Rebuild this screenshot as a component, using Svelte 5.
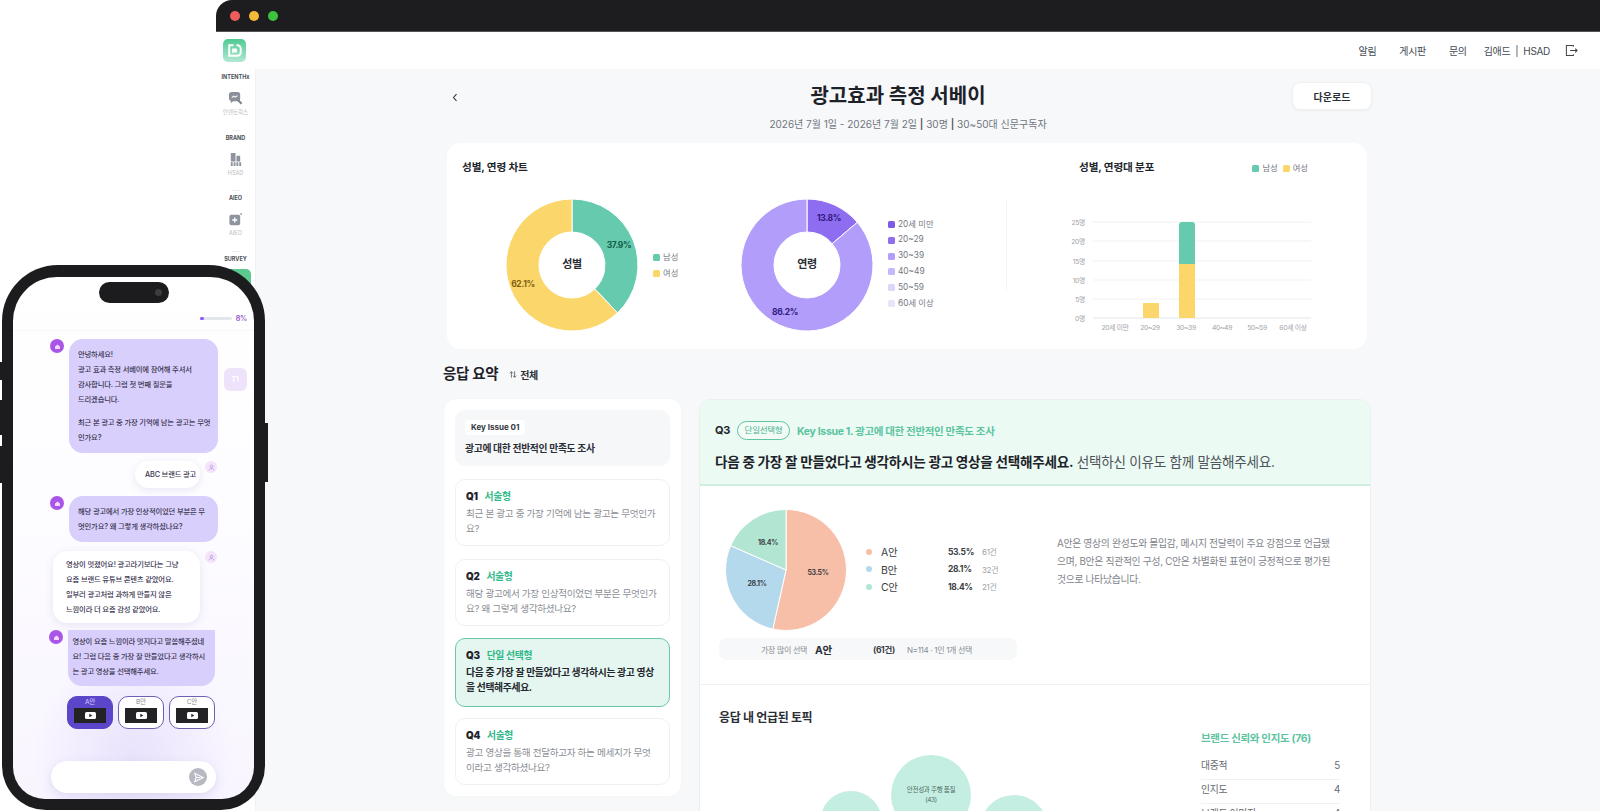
<script>
  function pt(cx, cy, r, pct) {
    const a = (pct / 100) * Math.PI * 2 - Math.PI / 2;
    return [cx + r * Math.cos(a), cy + r * Math.sin(a)];
  }
  function slice(cx, cy, r, r0, p0, p1) {
    const [x1, y1] = pt(cx, cy, r, p0);
    const [x2, y2] = pt(cx, cy, r, p1);
    const large = p1 - p0 > 50 ? 1 : 0;
    if (!r0) return `M${cx} ${cy}L${x1} ${y1}A${r} ${r} 0 ${large} 1 ${x2} ${y2}Z`;
    const [x3, y3] = pt(cx, cy, r0, p1);
    const [x4, y4] = pt(cx, cy, r0, p0);
    return `M${x1} ${y1}A${r} ${r} 0 ${large} 1 ${x2} ${y2}L${x3} ${y3}A${r0} ${r0} 0 ${large} 0 ${x4} ${y4}Z`;
  }
  const ageLegend = [
    ['20세 미만', '#7c5ce6'], ['20~29', '#8f6df0'], ['30~39', '#b39dfb'],
    ['40~49', '#c7b8fb'], ['50~59', '#dcd6fa'], ['60세 이상', '#e8e5fb']
  ];
  const grid = [['25명', 22], ['20명', 41], ['15명', 61], ['10명', 80], ['5명', 99], ['0명', 118]];
  const ageX = [['20세 미만', 36], ['20~29', 71], ['30~39', 107], ['40~49', 143], ['50~59', 178], ['60세 이상', 214]];
  const questions = [
    { q: 'Q1', type: '서술형', text: '최근 본 광고 중 가장 기억에 남는 광고는 무엇인가\n요?' },
    { q: 'Q2', type: '서술형', text: '해당 광고에서 가장 인상적이었던 부분은 무엇인가\n요? 왜 그렇게 생각하셨나요?' },
    { q: 'Q3', type: '단일 선택형', text: '다음 중 가장 잘 만들었다고 생각하시는 광고 영상\n을 선택해주세요.', active: true },
    { q: 'Q4', type: '서술형', text: '광고 영상을 통해 전달하고자 하는 메세지가 무엇\n이라고 생각하셨나요?' }
  ];
  const options = [
    ['A안', '53.5%', '61건', '#f8bfa8'],
    ['B안', '28.1%', '32건', '#b5d9ec'],
    ['C안', '18.4%', '21건', '#b3e6d2']
  ];
  const topics = [['대중적', 5], ['인지도', 4], ['브랜드 이미지', 4]];
  const choices = ['A안', 'B안', 'C안'];
</script>

<div class="page">
  <div class="window">
    <div class="titlebar">
      <i class="dot red"></i><i class="dot yellow"></i><i class="dot green"></i>
    </div>
    <header class="topnav">
      <div class="logo">
        <svg viewBox="0 0 24 24" width="23" height="23" fill="none" stroke="#fff">
          <path d="M11 6.500H6.500v11H15a3.500 3.500 0 0 0 3.500-3.500v-4A3.500 3.500 0 0 0 15 6.500h-1" stroke-width="2"/>
          <path d="M9.500 10h5v4h-4l-1 1.200z" fill="#fff" stroke="none"/>
        </svg>
      </div>
      <nav class="links">
        <span>알림</span><span>게시판</span><span>문의</span>
        <span class="account">김애드 &nbsp;|&nbsp; HSAD</span>
        <svg class="logout" viewBox="0 0 14 14" width="13" height="13" fill="none" stroke="#444" stroke-width="1.100">
          <path d="M9 3V1.500H1.500v11H9V11"/><path d="M5.500 7H13M11 5l2 2-2 2"/>
        </svg>
      </nav>
    </header>
    <div class="body">
      <aside class="side">
        <b>INTENTHx</b>
        <svg viewBox="0 0 16 16" width="15" height="15">
          <path d="M1 4a3 3 0 0 1 3-3h6a3 3 0 0 1 3 3v4a3 3 0 0 1-3 3H5.500L3 13v-2.400A3 3 0 0 1 1 8z" fill="#8a8f9a"/>
          <path d="M10.500 9.500l4 4" stroke="#7c818c" stroke-width="2.200"/>
          <path d="M4 7l2-1.500 1.500 1L10 5" stroke="#fff" fill="none" stroke-width="1.100"/>
        </svg>
        <small>인텐트릭스</small>
        <hr />
        <b>BRAND</b>
        <svg viewBox="0 0 16 16" width="15" height="15" fill="#8e939e">
          <path d="M3 1h5v9H3zM9 4h4v6H9zM3 11h2v4H3zM6 11h2v4H6zM9 11h2v4H9zM12 11h2v4h-2z"/>
        </svg>
        <small>HSAD</small>
        <hr />
        <b>AIEO</b>
        <svg viewBox="0 0 16 16" width="15" height="15">
          <rect x="1.500" y="3" width="11.500" height="11" rx="2" fill="#8e939e"/>
          <path d="M7.200 5.800v5.400M4.500 8.500h5.400" stroke="#fff" stroke-width="1.400"/>
          <circle cx="14" cy="2" r="1" fill="#8e939e"/>
        </svg>
        <small>AIEO</small>
        <hr />
        <b>SURVEY</b>
        <i class="side-active"></i>
      </aside>
      <main class="main">
        <div class="head">
          <button class="back" aria-label="뒤로">
            <svg viewBox="0 0 8 12" width="6" height="9" fill="none" stroke="#333" stroke-width="1.400"><path d="M6 1.500L2 6l4 4.500"/></svg>
          </button>
          <div class="headings">
            <h1>광고효과 측정 서베이</h1>
            <p>2026년 7월 1일 - 2026년 7월 2일 <em>|</em> 30명 <em>|</em> 30~50대 신문구독자</p>
          </div>
          <button class="download">다운로드</button>
        </div>

        <section class="chartcard">
          <div class="chartleft">
            <h3>성별, 연령 차트</h3>
            <div class="donuts">
              <div class="donutgroup first">
                <svg viewBox="0 0 132 132" width="132" height="132">
                  <path d={slice(66, 66, 66, 33, 0, 37.9)} fill="#66cbae" stroke="#fff"/>
                  <path d={slice(66, 66, 66, 33, 37.9, 100)} fill="#fbd66b" stroke="#fff"/>
                  <text x="113" y="49" class="pct" fill="#0f5c47">37.9%</text>
                  <text x="17" y="88" class="pct" fill="#7d5f10">62.1%</text>
                  <text x="66" y="69" class="center">성별</text>
                </svg>
                <ul class="legend">
                  <li><i style="background:#66cbae"></i>남성</li>
                  <li><i style="background:#fbd66b"></i>여성</li>
                </ul>
              </div>
              <div class="donutgroup">
                <svg viewBox="0 0 132 132" width="132" height="132">
                  <path d={slice(66, 66, 66, 33, 0, 13.8)} fill="#8f6df0" stroke="#fff"/>
                  <path d={slice(66, 66, 66, 33, 13.8, 100)} fill="#b39dfb" stroke="#fff"/>
                  <text x="88" y="22" class="pct" fill="#2f1a80">13.8%</text>
                  <text x="44" y="116" class="pct" fill="#2f1a80">86.2%</text>
                  <text x="66" y="69" class="center">연령</text>
                </svg>
                <ul class="legend age">
                  {#each ageLegend as [label, color]}
                    <li><i style="background:{color}"></i>{label}</li>
                  {/each}
                </ul>
              </div>
            </div>
          </div>
          <div class="divider"></div>
          <div class="chartright">
            <div class="barhead">
              <h3>성별, 연령대 분포</h3>
              <ul class="legend inline">
                <li><i style="background:#66cbae"></i>남성</li>
                <li><i style="background:#fbd66b"></i>여성</li>
              </ul>
            </div>
            <svg class="bars" viewBox="0 0 240 140" width="240" height="140">
              {#each grid as [label, y]}
                <line x1="14" x2="232" y1={y} y2={y} stroke={y === 118 ? '#e4e6ea' : '#f0f1f3'}/>
                <text x="6" y={y + 2.500} text-anchor="end" class="axis">{label}</text>
              {/each}
              <rect x="64" y="103" width="16" height="15" fill="#fbd66b"/>
              <path d="M100 64V25a3 3 0 0 1 3-3h10a3 3 0 0 1 3 3v39z" fill="#66cbae"/>
              <rect x="100" y="64" width="16" height="54" fill="#fbd66b"/>
              {#each ageX as [label, x]}
                <text x={x} y="130" text-anchor="middle" class="axis">{label}</text>
              {/each}
            </svg>
          </div>
        </section>

        <div class="sumhead">
          <h2>응답 요약</h2>
          <svg viewBox="0 0 10 10" width="8" height="9" fill="none" stroke="#555" stroke-width="1"><path d="M3 9V1.500M1 3.500l2-2 2 2M7 1v7.500M5 6.500l2 2 2-2"/></svg>
          <span>전체</span>
        </div>

        <div class="columns">
          <div class="qpanel">
            <div class="issue">
              <span class="issuetag">Key Issue 01</span>
              <p>광고에 대한 전반적인 만족도 조사</p>
            </div>
            {#each questions as item}
              <div class="qcard" class:active={item.active}>
                <div class="qline"><b>{item.q}</b><span>{item.type}</span></div>
                <p>{item.text}</p>
              </div>
            {/each}
          </div>

          <div class="detail">
            <div class="dhead">
              <div class="dmeta">
                <b>Q3</b><span class="pill">단일선택형</span><span class="issueline">Key Issue 1. 광고에 대한 전반적인 만족도 조사</span>
              </div>
              <p class="dq"><b>다음 중 가장 잘 만들었다고 생각하시는 광고 영상을 선택해주세요.</b> 선택하신 이유도 함께 말씀해주세요.</p>
            </div>
            <div class="dbody">
              <div class="dleft">
                <div class="pierow">
                  <svg viewBox="0 0 122 122" width="122" height="122">
                    <path d={slice(61, 61, 60.500, 0, 0, 53.5)} fill="#f8bfa8" stroke="#fff"/>
                    <path d={slice(61, 61, 60.500, 0, 53.5, 81.6)} fill="#b5d9ec" stroke="#fff"/>
                    <path d={slice(61, 61, 60.500, 0, 81.6, 100)} fill="#b3e6d2" stroke="#fff"/>
                    <text x="93" y="66" class="slice">53.5%</text>
                    <text x="32" y="77" class="slice">28.1%</text>
                    <text x="43" y="36" class="slice">18.4%</text>
                  </svg>
                  <ul class="optlist">
                    {#each options as [name, pct, count, color]}
                      <li><i style="background:{color}"></i><span class="oname">{name}</span><b>{pct}</b><span class="ocount">{count}</span></li>
                    {/each}
                  </ul>
                </div>
                <div class="stat">
                  <span class="s1">가장 많이 선택</span><b class="s2">A안</b><b class="s3">(61건)</b><span class="s4">N=114 · 1인 1개 선택</span>
                </div>
              </div>
              <p class="summary">A안은 영상의 완성도와 몰입감, 메시지 전달력이 주요 강점으로 언급됐으며, B안은 직관적인 구성, C안은 차별화된 표현이 긍정적으로 평가된 것으로 나타났습니다.</p>
            </div>
            <div class="topics">
              <div class="tleft">
                <h4>응답 내 언급된 토픽</h4>
                <svg viewBox="0 0 260 70" width="260" height="70" class="bubbles">
                  <circle cx="41" cy="65" r="31" fill="#c5eee2"/>
                  <circle cx="121" cy="38" r="40" fill="#c5eee2"/>
                  <circle cx="204" cy="72" r="34" fill="#c5eee2"/>
                  <text x="121" y="35" class="btext" font-weight="700">안전성과 주행 품질</text>
                  <text x="121" y="45" class="btext">(43)</text>
                </svg>
              </div>
              <div class="tright">
                <h5>브랜드 신뢰와 인지도 (76)</h5>
                {#each topics as [name, n]}
                  <div class="trow"><span>{name}</span><span>{n}</span></div>
                {/each}
              </div>
            </div>
          </div>
        </div>
      </main>
    </div>
  </div>

  <div class="phone">
    <i class="btn b1"></i><i class="btn b2"></i><i class="btn b3"></i><i class="btn b4"></i>
    <div class="screen">
      <div class="island"><i></i></div>
      <div class="progress"><div class="track"><i></i></div><span>8%</span></div>
      <div class="chat">
        <div class="row bot">
          <i class="ava"><svg viewBox="0 0 10 10" width="7" height="7"><path d="M1.500 5L5 2l3.500 3v3.500h-7z" fill="#f3d9ff"/></svg></i>
          <div class="bubble lav">
            <p>안녕하세요!<br />광고 효과 측정 서베이에 참여해 주셔서<br />감사합니다. 그럼 첫 번째 질문을<br />드리겠습니다.</p>
            <p class="gap">최근 본 광고 중 가장 기억에 남는 광고는 무엇<br />인가요?</p>
          </div>
          <span class="t1">T1</span>
        </div>
        <div class="row user r2">
          <div class="bubble white short">ABC 브랜드 광고</div>
          <i class="uava"><svg viewBox="0 0 10 10" width="7" height="7" fill="none" stroke="#b98ad8"><circle cx="5" cy="3.500" r="1.800"/><path d="M1.500 9c.5-2 2-2.500 3.500-2.500S8 7 8.500 9"/></svg></i>
        </div>
        <div class="row bot r3">
          <i class="ava"><svg viewBox="0 0 10 10" width="7" height="7"><path d="M1.500 5L5 2l3.500 3v3.500h-7z" fill="#f3d9ff"/></svg></i>
          <div class="bubble lav">해당 광고에서 가장 인상적이었던 부분은 무<br />엇인가요? 왜 그렇게 생각하셨나요?</div>
        </div>
        <div class="row user r4">
          <div class="bubble white long">영상이 멋졌어요! 광고라기보다는 그냥<br />요즘 브랜드 유튜브 콘텐츠 같았어요.<br />일부러 광고처럼 과하게 만들지 않은<br />느낌이라 더 요즘 감성 같았어요.</div>
          <i class="uava"><svg viewBox="0 0 10 10" width="7" height="7" fill="none" stroke="#b98ad8"><circle cx="5" cy="3.500" r="1.800"/><path d="M1.500 9c.5-2 2-2.500 3.500-2.500S8 7 8.500 9"/></svg></i>
        </div>
        <div class="row bot r5">
          <i class="ava"><svg viewBox="0 0 10 10" width="7" height="7"><path d="M1.500 5L5 2l3.500 3v3.500h-7z" fill="#f3d9ff"/></svg></i>
          <div class="bubble lav flat">영상이 요즘 느낌이라 멋지다고 말씀해주셨네<br />요! 그럼 다음 중 가장 잘 만들었다고 생각하시<br />는 광고 영상을 선택해주세요.</div>
        </div>
        <div class="choices">
          {#each choices as c, i}
            <div class="choice" class:sel={i === 0}>
              <span>{c}</span>
              <div class="video"><svg viewBox="0 0 11 7" width="11" height="7"><rect width="11" height="7" rx="1.500" fill="#fff"/><path d="M4.300 1.800l3 1.700-3 1.700z" fill="#222"/></svg></div>
            </div>
          {/each}
        </div>
      </div>
      <div class="input">
        <i class="send"><svg viewBox="0 0 12 12" width="11" height="11"><path d="M2 1.500l9 4.500-9 4.500 1.500-4.500z" fill="none" stroke="#fff" stroke-width="1.200"/><path d="M3.500 6H8" stroke="#fff"/></svg></i>
      </div>
    </div>
  </div>
</div>

<style>
  :global(body) { margin: 0; background: #fff; }
  * { box-sizing: border-box; }
  ul { list-style: none; margin: 0; padding: 0; }
  h1, h2, h3, h4, h5, p { margin: 0; }
  i { display: block; font-style: normal; }
  em { font-style: normal; color: #555; font-weight: 600; }

  .page {
    position: relative;
    height: 811px;
    overflow: hidden;
    padding-left: 216px;
    font-family: Inter, "Noto Sans CJK KR", sans-serif;
    color: #1f2329;
    letter-spacing: -0.02em;
  }
  .window { height: 811px; display: flex; flex-direction: column; }
  .titlebar {
    height: 32px; flex: none; background: #1d1d1f; border-radius: 16px 0 0 0;
    display: flex; align-items: center; gap: 9px; padding-left: 14px;
    border-bottom: 1px solid #555;
  }
  .dot { width: 10px; height: 10px; border-radius: 50%; }
  .red { background: #ee5c5e; } .yellow { background: #f5b93a; } .green { background: #3cc23f; }

  .topnav { height: 37px; flex: none; display: flex; align-items: center; justify-content: space-between; padding: 0 22px 0 7px; background: #fff; }
  .logo { width: 23px; height: 23px; border-radius: 5px; background: linear-gradient(180deg, #4fcb93, #b2e8d4); display: flex; align-items: center; justify-content: center; }
  .links { display: flex; align-items: center; font-size: 10px; color: #454a52; }
  .links span:nth-child(1) { margin-right: 23px; }
  .links span:nth-child(2) { margin-right: 23px; }
  .links span:nth-child(3) { margin-right: 17px; }
  .account { margin-right: 15px; }

  .body { flex: 1; display: flex; min-height: 0; }
  .side {
    width: 40px; flex: none; background: #fff; border-right: 1px solid #f0f1f3;
    display: flex; flex-direction: column; align-items: center; padding-top: 4px;
  }
  .side b { font-size: 5.500px; line-height: 8px; color: #4a4f58; font-weight: 700; letter-spacing: 0; }
  .side svg { margin-top: 10px; }
  .side small { font-size: 5.500px; line-height: 8px; color: #b6bac1; margin-top: 2px; letter-spacing: 0; }
  .side hr { width: 8px; height: 1px; border: 0; background: #eee; margin: 13.500px 0 3px; }
  .side-active { width: 31px; height: 28px; border-radius: 5px; background: #5cc98f; margin-top: 6px; flex: none; }

  .main { flex: 1; background: #f7f8fa; padding: 13px 0 0 187px; overflow: hidden; }
  .head { width: 929px; height: 61px; display: flex; align-items: flex-start; }
  .back { width: 24px; height: 24px; border: 0; background: none; padding: 0; margin: 3px 0 0 0; }
  .headings { flex: 1; text-align: center; padding-left: 57px; }
  .headings h1 { font-size: 20px; line-height: 28px; font-weight: 700; color: #1d2229; padding-right: 20px; letter-spacing: 0; }
  .headings p { font-size: 10px; line-height: 16px; color: #70757d; margin-top: 6px; letter-spacing: 0; }
  .download {
    width: 80px; height: 28px; background: #fff; border: 1px solid #eff0f2; border-radius: 8px;
    font: 700 10px Inter, "Noto Sans CJK KR", sans-serif; color: #2b2f36; box-shadow: 0 1px 3px rgba(0,0,0,.04);
  }

  .chartcard { width: 920px; height: 206px; margin-left: 4px; background: #fff; border-radius: 14px; display: flex; }
  .chartleft { width: 559px; padding: 18px 0 0 15px; flex: none; }
  .chartcard h3 { font-size: 10.600px; line-height: 14px; font-weight: 700; color: #22262c; letter-spacing: -0.01em; }
  .donuts { display: flex; margin-top: 24px; padding-left: 44px; }
  .donutgroup { display: flex; align-items: center; gap: 15px; }
  .donutgroup.first { width: 235px; }
  .pct { font: 700 8.500px Inter, sans-serif; text-anchor: middle; }
  .center { font: 700 11px Inter, "Noto Sans CJK KR", sans-serif; text-anchor: middle; fill: #2a2e35; }
  .legend li { display: flex; align-items: center; gap: 3px; font-size: 8.300px; line-height: 16px; color: #74787f; letter-spacing: 0; }
  .legend i { width: 7px; height: 7px; border-radius: 1.500px; flex: none; }
  .legend.age { margin-top: -2px; }
  .legend.age li { line-height: 15.800px; }
  .legend.inline { display: flex; gap: 5px; }
  .divider { width: 1px; height: 90px; margin-top: 57px; background: #f4f5f6; flex: none; }
  .chartright { margin-left: 72px; width: 280px; padding-top: 17px; }
  .barhead { display: flex; justify-content: space-between; align-items: center; width: 229px; }
  .bars { display: block; margin-top: 24px; overflow: visible; }
  .axis { font: 6.800px Inter, "Noto Sans CJK KR", sans-serif; fill: #a0a4aa; }

  .sumhead { display: flex; align-items: center; height: 50px; width: 920px; }
  .sumhead h2 { font-size: 14.500px; line-height: 20px; font-weight: 700; margin-right: 11px; color: #1d2229; }
  .sumhead span { font-size: 10px; font-weight: 700; margin-left: 3px; color: #2b2f36; }

  .columns { display: flex; gap: 18px; align-items: flex-start; width: 928px; padding-left: 1px; }
  .qpanel { width: 237px; flex: none; height: 397px; background: #fff; border-radius: 12px; padding: 11px; box-shadow: 0 0 2px rgba(0,0,0,.04); }
  .issue { height: 56px; background: #f6f7f9; border-radius: 10px; padding: 10px; margin-bottom: 13px; }
  .issuetag { display: block; width: fit-content; height: 15px; padding: 0 6px; background: #fff; border-radius: 4px; font-size: 8px; line-height: 15px; font-weight: 700; color: #333840; letter-spacing: 0; }
  .issue p { font-size: 9.800px; line-height: 14px; font-weight: 700; color: #2a2e35; margin-top: 7px; }
  .qcard { height: 67px; border: 1px solid #eef0f2; border-radius: 10px; padding: 10px 10px 0; margin-bottom: 12.500px; background: #fff; }
  .qcard.active { background: #e4f6ef; border-color: #68c7a5; height: 69px; margin-bottom: 11px; }
  .qline { display: flex; gap: 7px; font-size: 9.800px; line-height: 13px; font-weight: 700; }
  .qline span { color: #2fb889; }
  .qcard p { font-size: 9.600px; line-height: 15px; color: #8a8e95; margin-top: 3px; white-space: pre; }
  .qcard.active p { color: #23272d; font-weight: 700; font-size: 9.800px; }

  .detail { flex: 1; height: 500px; background: #fff; border: 1px solid #eceef0; border-radius: 12px 12px 0 0; overflow: hidden; }
  .dhead { height: 86px; background: #ebfaf3; border-bottom: 2px solid #cfeee0; padding: 21px 15px 0; }
  .dmeta { display: flex; align-items: center; height: 18px; }
  .dmeta b { font-size: 11px; color: #22262c; margin-right: 7px; }
  .pill { height: 19px; width: 53px; border: 1px solid #62c3a0; border-radius: 10px; font-size: 8.500px; line-height: 17px; color: #44b48c; text-align: center; margin-right: 7px; background: #f3fbf7; letter-spacing: -0.03em; }
  .issueline { font-size: 10.500px; font-weight: 700; color: #5cc49f; }
  .dq { font-size: 13.600px; line-height: 20px; margin-top: 13px; color: #4f545b; letter-spacing: -0.02em; }
  .dq b { color: #1d2229; }

  .dbody { height: 199px; display: flex; border-bottom: 1px solid #f0f1f3; padding: 23px 0 0 19px; }
  .dleft { width: 298px; flex: none; }
  .pierow { display: flex; align-items: center; padding-left: 6px; height: 122px; }
  .slice { font: 700 7px Inter, sans-serif; text-anchor: middle; fill: #3a3e44; }
  .optlist { margin-left: 19px; margin-top: -2px; }
  .optlist li { display: flex; align-items: center; height: 17.500px; }
  .optlist i { width: 6px; height: 6px; border-radius: 50%; margin-right: 9px; }
  .oname { width: 67px; font-size: 10.500px; color: #3a3e44; }
  .optlist b { width: 34px; font-size: 8.500px; color: #3a3e44; }
  .ocount { font-size: 8px; color: #a0a4aa; }
  .stat { height: 22px; margin-top: 7px; background: #f7f8fa; border-radius: 8px; display: flex; align-items: center; padding-left: 42px; }
  .s1 { font-size: 8px; color: #888c93; width: 54px; }
  .s2 { font-size: 10.500px; color: #2a2e35; width: 58px; }
  .s3 { font-size: 8.500px; color: #3a3e44; width: 34px; }
  .s4 { font-size: 8px; color: #888c93; }
  .summary { margin: 26px 0 0 40px; width: 278px; font-size: 9.800px; line-height: 18px; color: #80848b; letter-spacing: -0.03em; }

  .topics { display: flex; padding: 25px 0 0 19px; }
  .tleft { width: 482px; }
  .tleft h4 { font-size: 12px; line-height: 16px; font-weight: 700; color: #2a2e35; }
  .bubbles { display: block; margin: 31px 0 0 91px; overflow: visible; }
  .btext { font: 6.500px Inter, "Noto Sans CJK KR", sans-serif; text-anchor: middle; fill: #4f6c63; }
  .tright { width: 139px; padding-top: 21px; }
  .tright h5 { font-size: 10.500px; line-height: 16px; font-weight: 700; color: #5cc49f; margin-bottom: 9px; }
  .trow { display: flex; justify-content: space-between; font-size: 9.800px; color: #666a71; height: 24px; line-height: 20px; border-bottom: 1px solid #f0f1f3; }

  /* phone overlays the window */
  .phone {
    position: absolute; left: 2px; top: 265px; width: 263px; height: 545px;
    background: #1c1c1e; border-radius: 56px 56px 44px 44px; padding: 12px 11px 11px;
  }
  .btn { position: absolute; background: #1c1c1e; }
  .b1 { left: -2px; top: 97px; width: 3px; height: 18px; }
  .b2 { left: -2px; top: 135px; width: 3px; height: 35px; }
  .b3 { left: -2px; top: 181px; width: 3px; height: 37px; }
  .b4 { right: -3px; top: 158px; width: 4px; height: 59px; }
  .screen {
    position: relative; height: 522px; border-radius: 44px 44px 32px 32px; overflow: hidden;
    background:
      radial-gradient(ellipse 100px 120px at 50% 92%, #e9e2fc 0%, rgba(233,226,252,0) 100%),
      linear-gradient(180deg, #fff 0%, #fdfcff 45%, #f8f5ff 100%);
    letter-spacing: -0.01em;
  }
  .island { position: absolute; left: 86px; top: 5px; width: 70px; height: 21px; border-radius: 11px; background: #1c1c1e; }
  .island i { position: absolute; right: 7px; top: 7px; width: 7px; height: 7px; border-radius: 50%; background: #3c3c40; }
  .progress { height: 54px; border-bottom: 1px solid #f7f7f9; display: flex; align-items: flex-end; justify-content: flex-end; padding: 0 7px 7px 0; gap: 4px; }
  .track { width: 32px; height: 3px; border-radius: 2px; background: #e3e7ec; margin-bottom: 3px; }
  .track i { width: 4px; height: 3px; background: #8b5cf6; border-radius: 2px; }
  .progress span { font-size: 7px; line-height: 9px; font-weight: 700; color: #9a5fd0; }

  .chat { padding-top: 8px; }
  .row { display: flex; align-items: flex-start; font-size: 7.300px; line-height: 15px; font-weight: 500; color: #3a3650; }
  .row.bot { padding-left: 37px; }
  .row.user { justify-content: flex-end; padding-right: 37px; }
  .ava { width: 14px; height: 14px; border-radius: 50%; background: #a855e8; margin-right: 4.500px; display: flex; align-items: center; justify-content: center; flex: none; }
  .uava { width: 12px; height: 12px; border-radius: 50%; background: #f3e4fb; display: flex; align-items: center; justify-content: center; margin-left: 5px; flex: none; }
  .bubble { border-radius: 14px; }
  .lav { width: 149px; background: #d9cffc; padding: 8px 9.500px; white-space: nowrap; }
  .lav p.gap { margin-top: 8px; }
  .t1 { width: 23px; height: 23px; border-radius: 6px; background: #efe3fb; color: #fff; font-size: 7px; font-weight: 700; text-align: center; line-height: 23px; margin: 29px 0 0 6px; flex: none; }
  .white { background: #fff; box-shadow: 0 2px 8px rgba(110,90,180,.14); }
  .short { height: 27px; width: 65px; border-radius: 14px; line-height: 27px; white-space: nowrap; padding-left: 10px; }
  .r2 { margin-top: 8px; }
  .r3 { margin-top: 8px; }
  .r4 { margin-top: 9px; }
  .long { width: 147px; padding: 6px 0 6px 13px; white-space: nowrap; }
  .r5 { margin-top: 7px; }
  .r5.bot { padding-left: 36px; }
  .lav.flat { border-radius: 0 0 14px 14px; padding: 3.500px 5px 7.500px; width: 147px; }
  .choices { display: flex; gap: 5px; padding: 10px 0 0 54px; }
  .choice { width: 46px; height: 33px; border: 1.200px solid #6e5fb0; border-radius: 10px; text-align: center; background: #fff; }
  .choice span { display: block; font-size: 6.500px; line-height: 11px; color: #8a8a96; }
  .choice.sel { background: #5b45c9; border-color: #5b45c9; }
  .choice.sel span { color: #d9d2ff; }
  .video { width: 32px; height: 15px; margin: 0 auto; background: #232326; display: flex; align-items: center; justify-content: center; }
  .input { position: absolute; left: 38px; bottom: 6px; width: 165px; height: 32px; background: #fff; border-radius: 16px; box-shadow: 0 3px 10px rgba(110,90,180,.15); }
  .send { position: absolute; right: 9px; top: 7px; width: 18px; height: 18px; border-radius: 50%; background: #b7b9c2; display: flex; align-items: center; justify-content: center; }
</style>
